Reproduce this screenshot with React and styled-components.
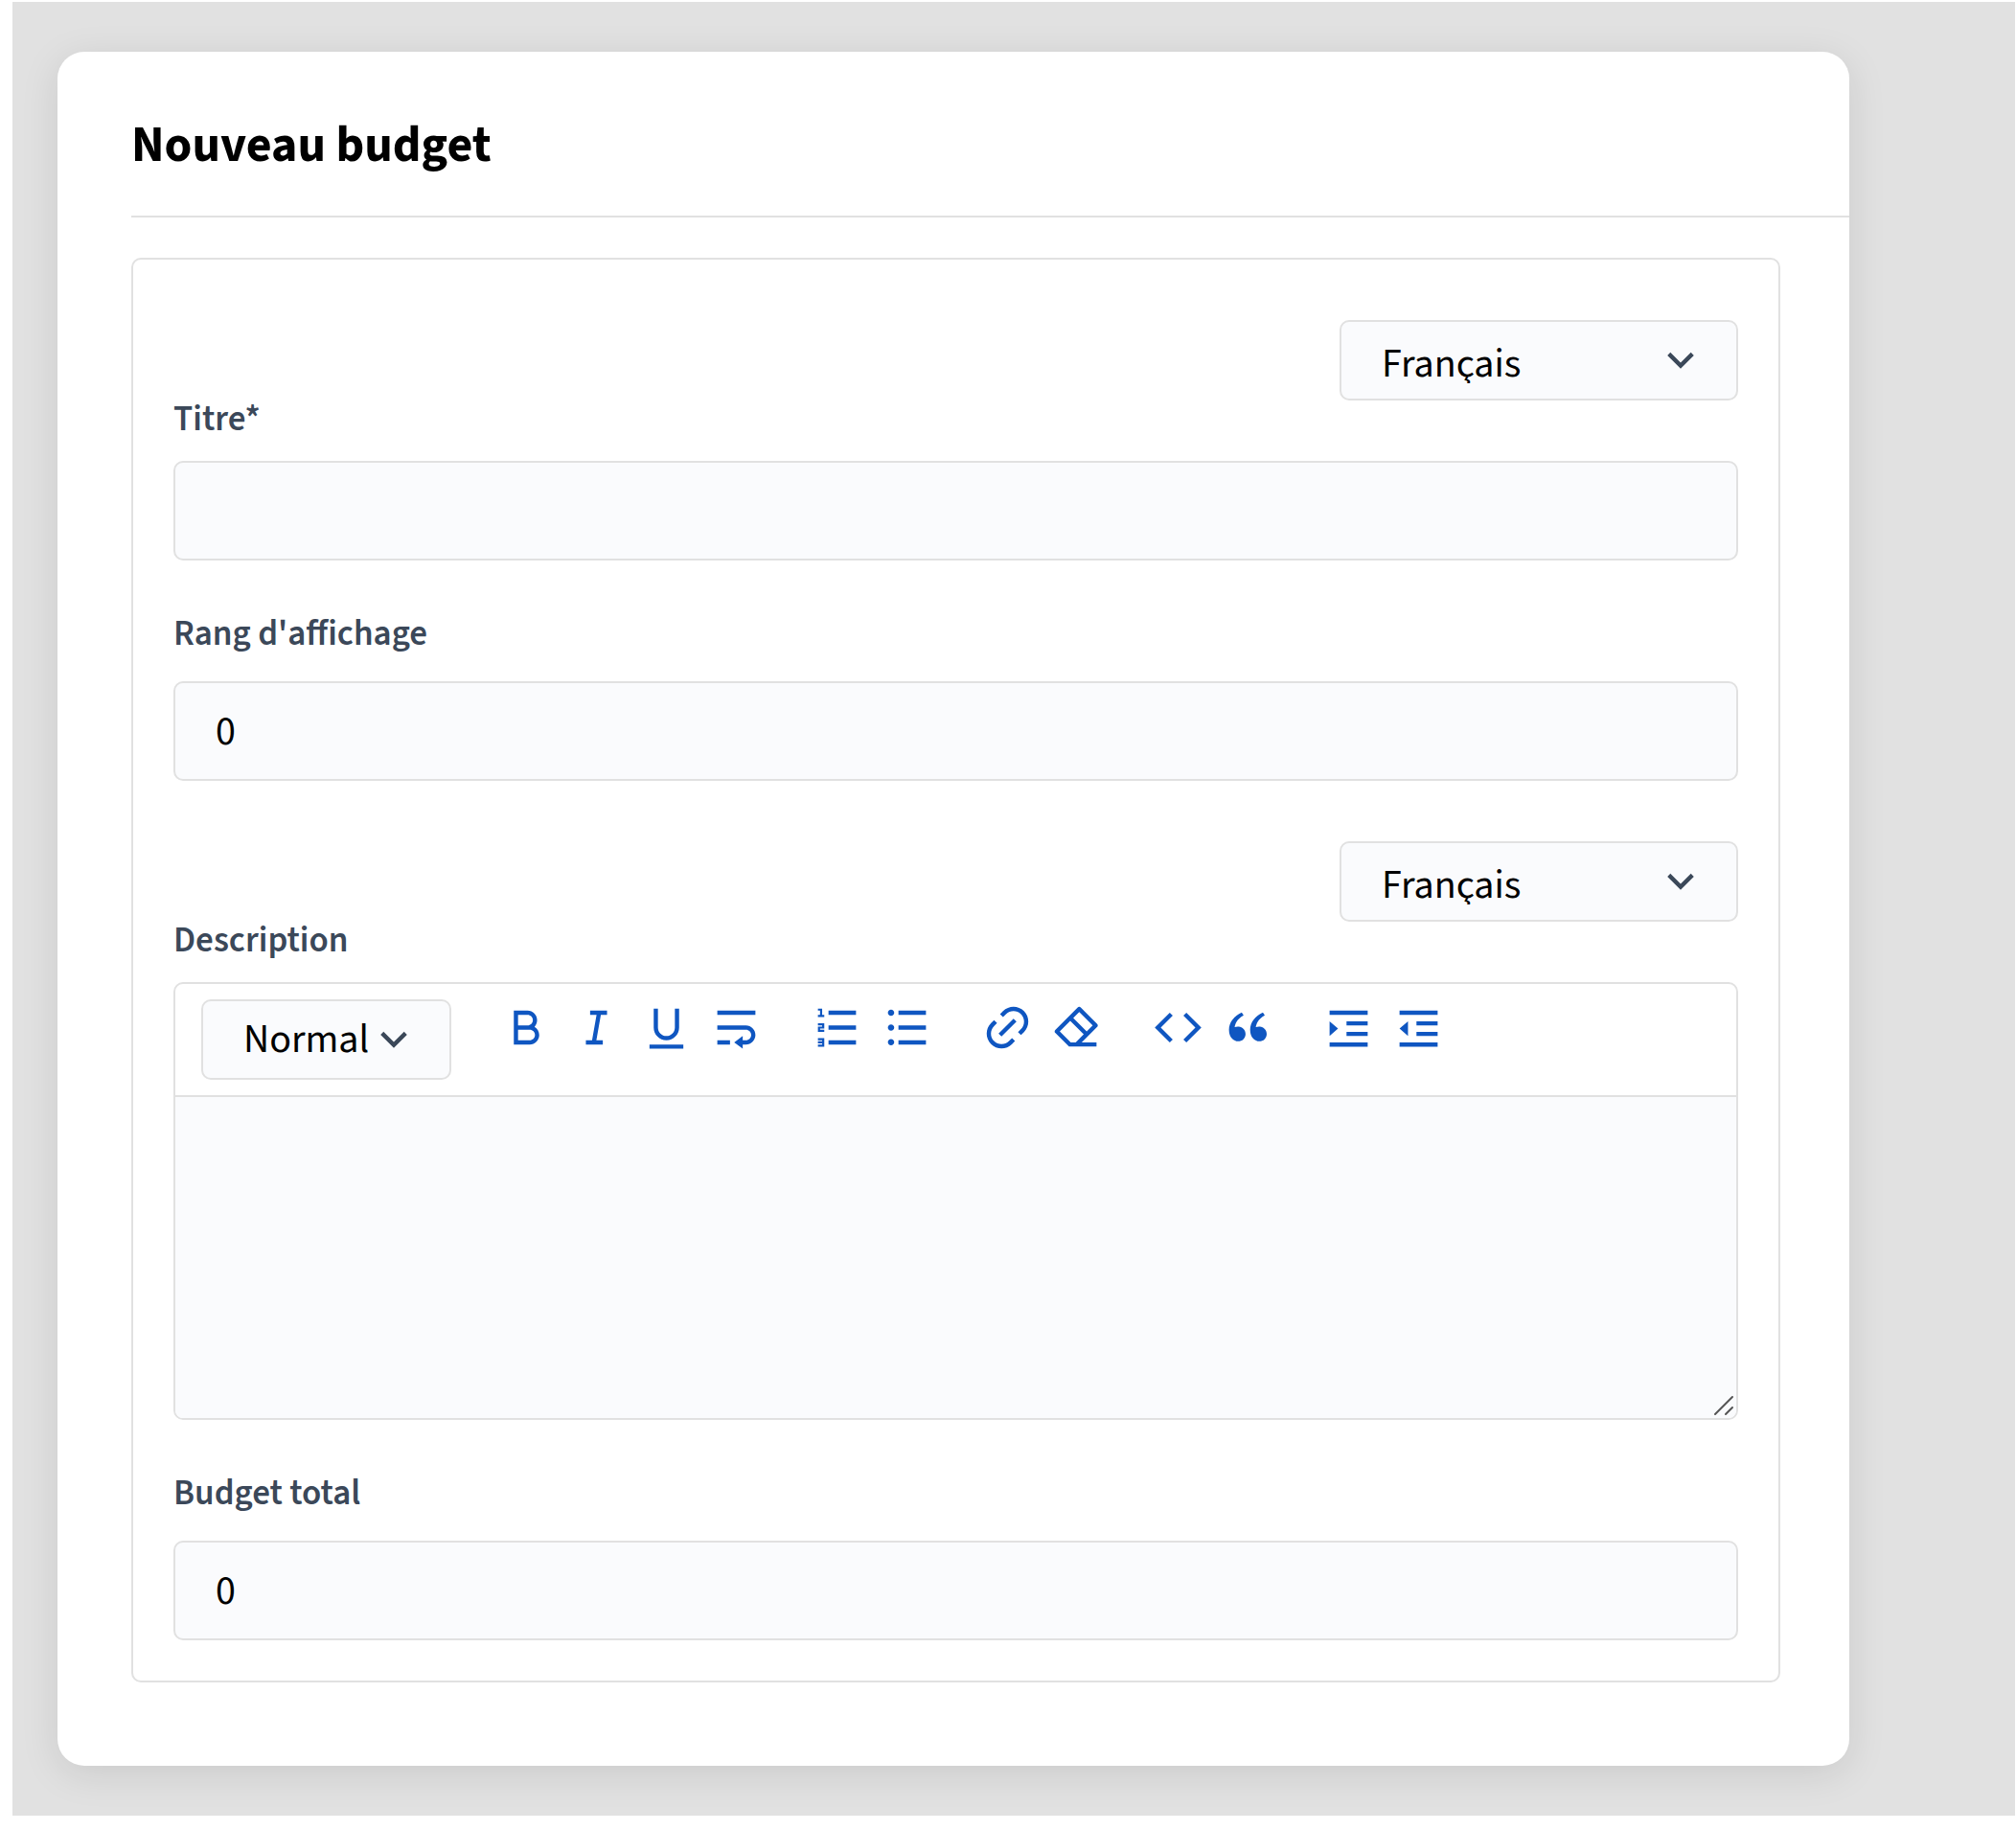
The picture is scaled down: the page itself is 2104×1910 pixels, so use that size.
import React from "react";
import styled, { createGlobalStyle } from "styled-components";
import {
  RiBold, RiItalic, RiUnderline, RiTextWrap, RiListOrdered, RiListUnordered,
  RiLink, RiEraserLine, RiCodeLine, RiDoubleQuotesL, RiIndentIncrease,
  RiIndentDecrease, RiArrowDownSLine,
} from "react-icons/ri";

const line = "#e1e1e1";
const fill = "#fafbfd";
const slate = "#3b4859";
const blue = "#0f56c1";

const GlobalStyle = createGlobalStyle`
  *, *::before, *::after { box-sizing: border-box; }
  body { margin: 0; background: #fff; }
  body, input, select, textarea, button {
    font-family: "Source Sans 3", "Noto Sans CJK SC", "Noto Sans", sans-serif;
  }
`;

const Page = styled.main`
  margin: 2px 1px 15px 13px;
  padding: 52px 173px 52px 47px;
  background: ${line};
`;

const Card = styled.section`
  padding: 57px 0 87px 77px;
  border-radius: 28px;
  background: #fff;
  box-shadow: 0 8px 40px rgba(0, 0, 0, 0.1);
`;

const Title = styled.h1`
  margin: 0;
  padding-bottom: 32px;
  border-bottom: 2px solid ${line};
  font-size: 52px;
  font-weight: 700;
  line-height: 82px;
  color: #000;
`;

const Panel = styled.div`
  display: flex;
  flex-direction: column;
  margin: 42px 72px 0 0;
  padding: 63px 42px 42px;
  border: 2px solid ${line};
  border-radius: 10px;
`;

const Field = styled.div`
  display: flex;
  flex-direction: column;
  margin-top: ${(p) => p.$gap || 0}px;
`;

const Label = styled.label`
  padding-bottom: ${(p) => (p.$tight ? 23 : 29)}px;
  font-size: 37px;
  font-weight: 600;
  line-height: 40px;
  color: ${slate};
`;

const Input = styled.input`
  width: 100%;
  height: 104px;
  padding: 2px 42px 0;
  border: 2px solid ${line};
  border-radius: 10px;
  background: ${fill};
  font-size: 42px;
  color: #000;
  outline: none;
`;

const SelectBox = styled.div`
  position: relative;
  flex: none;
  align-self: ${(p) => (p.$end ? "flex-end" : "flex-start")};
  width: ${(p) => p.$width}px;
`;

const Select = styled.select`
  display: block;
  width: 100%;
  height: 84px;
  padding: ${(p) => (p.$low ? "24px 42px 16px" : "20px 42px")};
  border: 2px solid ${line};
  border-radius: 10px;
  background: ${fill};
  font-size: 42px;
  line-height: 40px;
  color: #000;
  appearance: none;
  outline: none;
`;

const Chevron = styled(RiArrowDownSLine)`
  position: absolute;
  top: 16px;
  right: 34px;
  width: 52px;
  height: 52px;
  color: ${slate};
  pointer-events: none;
`;

const Editor = styled.div`
  position: relative;
  border: 2px solid ${line};
  border-radius: 10px;
  overflow: hidden;
`;

const Toolbar = styled.div`
  display: flex;
  align-items: flex-start;
  padding: 16px 27px;
  border-bottom: 2px solid ${line};
`;

const Tools = styled.div`
  display: flex;
  gap: 32px;
  margin-left: 42px;
`;

const Group = styled.div`
  display: flex;
`;

const Tool = styled.button`
  display: flex;
  padding: 3px 10px;
  border: 0;
  background: none;
  color: ${blue};
  cursor: pointer;

  svg { width: 53px; height: 53px; }
`;

const TextArea = styled.textarea`
  display: block;
  width: 100%;
  height: 335px;
  padding: 24px 42px;
  border: 0;
  background: ${fill};
  font-size: 42px;
  resize: none;
  outline: none;
`;

const Grip = styled.svg`
  position: absolute;
  right: 2px;
  bottom: 2px;
  width: 22px;
  height: 22px;
  pointer-events: none;
`;

const toolGroups = [
  [["Gras", RiBold], ["Italique", RiItalic], ["Souligné", RiUnderline], ["Retour à la ligne", RiTextWrap]],
  [["Liste numérotée", RiListOrdered], ["Liste à puces", RiListUnordered]],
  [["Lien", RiLink], ["Effacer la mise en forme", RiEraserLine]],
  [["Code", RiCodeLine], ["Citation", RiDoubleQuotesL]],
  [["Augmenter le retrait", RiIndentIncrease], ["Diminuer le retrait", RiIndentDecrease]],
];

function Dropdown({ label, value, width, end }) {
  return (
    <SelectBox $width={width} $end={end}>
      <Select aria-label={label} defaultValue={value} $low={end}>
        <option>{value}</option>
      </Select>
      <Chevron aria-hidden="true" />
    </SelectBox>
  );
}

export default function App() {
  return (
    <>
      <GlobalStyle />
      <Page>
        <Card>
          <Title>Nouveau budget</Title>
          <Panel>
            <Field>
              <Dropdown label="Langue du titre" value="Français" width={416} end />
              <Label htmlFor="title" $tight>Titre*</Label>
              <Input id="title" type="text" />
            </Field>
            <Field $gap={57}>
              <Label htmlFor="rank">Rang d'affichage</Label>
              <Input id="rank" type="text" inputMode="numeric" defaultValue="0" />
            </Field>
            <Field $gap={63}>
              <Dropdown label="Langue de la description" value="Français" width={416} end />
              <Label htmlFor="description" $tight>Description</Label>
              <Editor>
                <Toolbar>
                  <Dropdown label="Style de texte" value="Normal" width={261} />
                  <Tools>
                    {toolGroups.map((group, i) => (
                      <Group key={i}>
                        {group.map(([name, Icon]) => (
                          <Tool key={name} type="button" aria-label={name}>
                            <Icon />
                          </Tool>
                        ))}
                      </Group>
                    ))}
                  </Tools>
                </Toolbar>
                <TextArea id="description" />
                <Grip viewBox="0 0 22 22" fill="none" stroke="#555" strokeWidth="2" strokeLinecap="round" aria-hidden="true">
                  <path d="M2 20 20 2M13 20l7-7" />
                </Grip>
              </Editor>
            </Field>
            <Field $gap={57}>
              <Label htmlFor="total">Budget total</Label>
              <Input id="total" type="text" inputMode="numeric" defaultValue="0" />
            </Field>
          </Panel>
        </Card>
      </Page>
    </>
  );
}
